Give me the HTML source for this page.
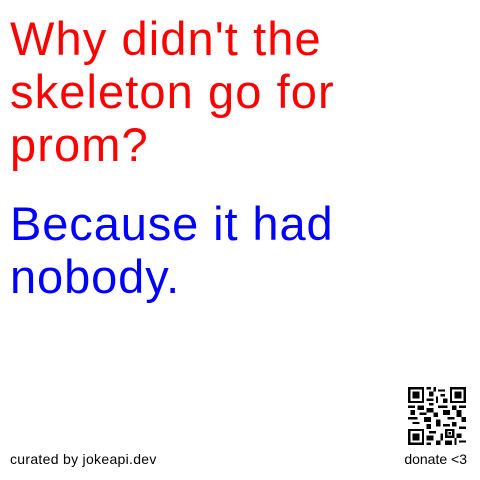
<!DOCTYPE html>
<html><head><meta charset="utf-8"><style>
html,body{margin:0;width:480px;height:480px;background:#fff;overflow:hidden;font-family:"Liberation Sans",Arial,sans-serif}
.q{position:absolute;left:10px;top:12px;color:#f00;font-size:47px;line-height:53px;white-space:nowrap;letter-spacing:1.1px}
.a{position:absolute;left:10px;top:197px;color:#00f;font-size:47px;line-height:53px;white-space:nowrap;letter-spacing:0.9px}
.c{position:absolute;left:10px;top:451px;font-size:14px;color:#000;letter-spacing:0.3px}
.d{position:absolute;right:13px;top:451px;font-size:14px;color:#000}
svg{position:absolute;left:408px;top:387px}
</style></head><body>
<div class="q">Why didn't the<br>skeleton go for<br>prom?</div>
<div class="a">Because it had<br>nobody.</div>
<div class="c">curated by jokeapi.dev</div>
<div class="d">donate &lt;3</div>
<svg width="58" height="58" viewBox="0 0 25 25" shape-rendering="crispEdges">
<g fill="#000">
<path d="M0 0h7v7h-7zM18 0h7v7h-7zM0 18h7v7h-7z"/>
</g>
<g fill="#fff"><path d="M1 1h5v5h-5zM19 1h5v5h-5zM1 19h5v5h-5z"/></g>
<g fill="#000"><path d="M2 2h3v3h-3zM20 2h3v3h-3zM2 20h3v3h-3z"/>
<path d="M8 0h2v1h-2zM11 0h1v2h-1zM13 1h3v1h-3zM9 2h2v2h-2zM14 3h2v1h-2zM12 4h1v3h-1zM8 5h3v1h-3zM15 5h2v2h-2zM9 7h2v1h-2zM0 8h3v1h-3zM4 8h3v2h-3zM13 8h4v1h-4zM19 8h2v2h-2zM22 8h3v1h-3zM8 9h3v2h-3zM1 10h2v2h-2zM15 10h3v2h-3zM21 10h2v3h-2zM5 11h3v1h-3zM11 11h2v2h-2zM0 13h4v1h-4zM7 13h3v2h-3zM17 13h3v1h-3zM23 13h2v2h-2zM2 15h3v1h-3zM12 14h2v3h-2zM19 15h2v2h-2zM8 16h2v2h-2zM15 16h3v1h-3zM22 17h3v1h-3zM9 19h3v1h-3zM16 18h4v4h-4zM17 19h2v2h-2zM14 20h1v3h-1zM8 21h3v2h-3zM21 20h2v2h-2zM12 23h2v2h-2zM16 23h3v2h-3zM22 23h3v1h-3zM8 24h2v1h-2zM20 22h1v3h-1z"/></g>
<rect x="17" y="19" width="2" height="2" fill="#fff"/><rect x="17.5" y="19.5" width="1" height="1" fill="#000"/>
</svg>
</body></html>
